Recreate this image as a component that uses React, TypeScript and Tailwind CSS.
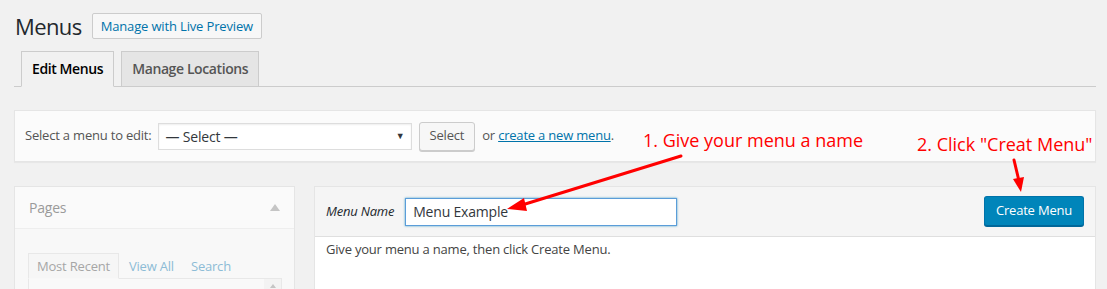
import React from 'react'

export default function App() {
  return (
    <div className="relative w-[1107px] h-[289px] overflow-hidden bg-[#f1f1f1] text-[13px] tracking-[-0.2px] text-[#23282d] font-['Open_Sans',sans-serif]">
      <div className="pl-[14px] pr-[11px]">
        {/* Title row */}
        <div className="flex items-center pt-[13px] h-[39px]">
          <h1 className="ml-[1px] text-[22px] tracking-[-0.6px] leading-[26px] font-normal text-[#23282d]">Menus</h1>
          <button className="ml-[10px] h-[26px] px-[8px] border border-[#ccc] bg-[#f7f7f7] rounded-[2px] text-[13px] tracking-[-0.15px] text-[#0073aa] leading-[24px]">
            Manage with Live Preview
          </button>
        </div>

        {/* Nav tabs */}
        <div className="mt-[13px] flex items-end border-b border-[#ccc] pl-[7px] h-[35px]">
          <div className="-mb-px h-[36px] px-[10px] border border-[#ccc] border-b-[#f1f1f1] bg-[#f1f1f1] text-[14px] tracking-[-0.4px] font-semibold text-black leading-[34px]">
            Edit Menus
          </div>
          <div className="ml-[7px] -mb-px h-[36px] px-[10px] border border-[#ccc] bg-[#e5e5e5] text-[14px] tracking-[-0.4px] font-semibold text-[#555] leading-[34px]">
            Manage Locations
          </div>
        </div>

        {/* Select a menu */}
        <div className="mt-[23px] h-[52px] border border-[#e5e5e5] bg-[#fbfbfb] shadow-[0_1px_1px_rgba(0,0,0,0.04)] flex items-center pl-[10px]">
          <span className="text-[#555]">Select a menu to edit:</span>
          <div className="ml-[6px] w-[254px] h-[27px] border border-[#ddd] bg-white flex items-center justify-between pl-[7px] pr-[6px] shadow-[inset_0_1px_2px_rgba(0,0,0,0.07)]">
            <span className="text-[14px] text-[#32373c]">— Select —</span>
            <span className="text-[9px] text-[#32373c]">▼</span>
          </div>
          <button className="ml-[7px] h-[29px] px-[10px] border border-[#ccc] bg-[#f7f7f7] rounded-[3px] shadow-[0_1px_0_#ccc] text-[#555]">
            Select
          </button>
          <span className="ml-[7px] text-[#555]">
            or <span className="text-[#0073aa] underline">create a new menu</span>.
          </span>
        </div>

        {/* Columns */}
        <div className="mt-[24px] flex gap-[19px]">
          {/* Pages metabox (disabled) */}
          <div className="w-[281px] h-[120px] border border-[#e5e5e5] bg-[#f8f8f8]">
            <div className="h-[42px] border-b border-[#eee] bg-[#fafafa] flex items-center justify-between pl-[14px] pr-[14px]">
              <span className="text-[14px] text-[#9a9a9a]">Pages</span>
              <span className="w-0 h-0 border-l-[5px] border-r-[5px] border-b-[7px] border-l-transparent border-r-transparent border-b-[#c5c5c5]" />
            </div>
            <div className="pt-[24px] pl-[13px] pr-[12px]">
              <div className="flex items-end h-[25px]">
                <div className="-mb-px h-[26px] px-[8px] border border-[#e8e8e8] border-b-[#f8f8f8] bg-[#f6f6f6] text-[#a6a6a6] leading-[24px]">
                  Most Recent
                </div>
                <span className="ml-[10px] text-[#8dbcd6] leading-[24px]">View All</span>
                <span className="ml-[17px] text-[#8dbcd6] leading-[24px]">Search</span>
              </div>
              <div className="h-[20px] border border-[#e8e8e8] bg-[#f9f9f9] flex justify-end">
                <div className="w-[17px] bg-[#f3f3f3] flex justify-center pt-[5px]">
                  <span className="w-0 h-0 border-l-[3px] border-r-[3px] border-b-[4px] border-l-transparent border-r-transparent border-b-[#c5c5c5]" />
                </div>
              </div>
            </div>
          </div>

          {/* Menu management */}
          <div className="flex-1 h-[120px] border border-[#e5e5e5] bg-white">
            <div className="h-[50px] bg-[#f5f5f5] border-b border-[#dfdfdf] flex items-center pl-[11px] pr-[11px]">
              <span className="italic text-[#23282d]">Menu Name</span>
              <div className="ml-[11px] w-[272px] h-[28px] border border-[#5b9dd9] bg-white shadow-[0_0_2px_rgba(30,140,190,0.8)] flex items-center pl-[7px] text-[14px] text-[#32373c]">
                Menu Example
              </div>
              <button className="ml-auto mb-[2px] w-[100px] h-[30px] rounded-[3px] border border-[#0073aa] border-b-[#006799] bg-[#0085ba] shadow-[0_1px_0_#006799] text-white text-[13px]">
                Create Menu
              </button>
            </div>
            <div className="pt-[3px] pl-[11px] text-[#444]">Give your menu a name, then click Create Menu.</div>
          </div>
        </div>
      </div>

      {/* Annotations */}
      <div className="absolute left-[643px] top-[128px] text-[18px] tracking-normal leading-[24px] text-[#ff0000] whitespace-nowrap">
        1. Give your menu a name
      </div>
      <div className="absolute left-[917px] top-[132px] text-[18px] tracking-normal leading-[24px] text-[#ff0000] whitespace-nowrap">
        2. Click "Creat Menu"
      </div>
      <svg className="absolute left-0 top-0 pointer-events-none" width="1107" height="289">
        <line x1="681" y1="156" x2="522" y2="205" stroke="#ff0000" strokeWidth="3" strokeLinecap="round" />
        <polygon points="507,209 524,198 527,211" fill="#ff0000" />
        <line x1="1014" y1="160" x2="1019" y2="181" stroke="#ff0000" strokeWidth="3" strokeLinecap="round" />
        <polygon points="1021,192 1013,179 1024,177" fill="#ff0000" />
      </svg>
    </div>
  )
}
